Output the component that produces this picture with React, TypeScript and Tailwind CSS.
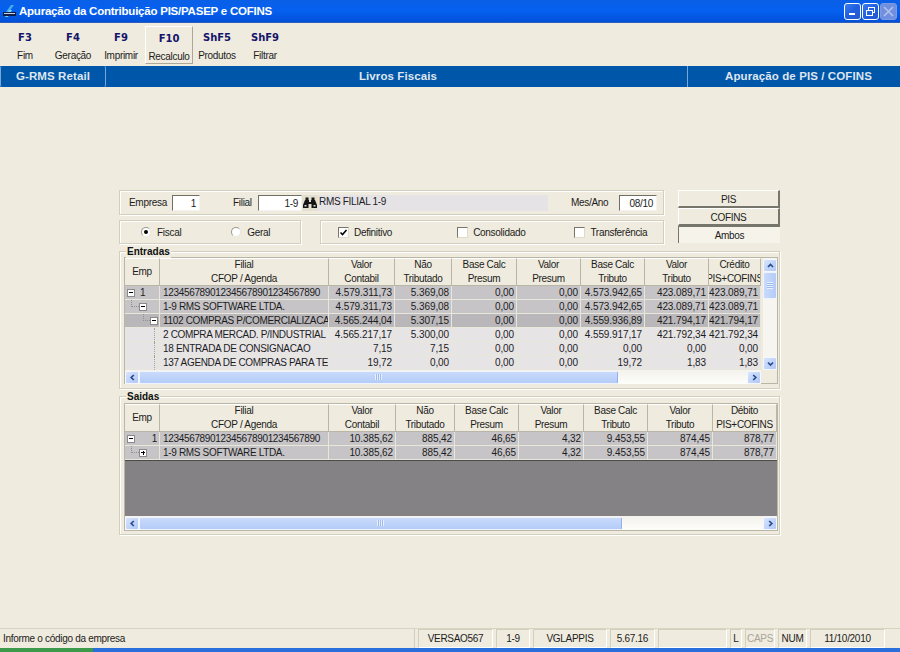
import { ReactNode } from "react"

const tools = [
  { key: "F3", label: "Fim" },
  { key: "F4", label: "Geração" },
  { key: "F9", label: "Imprimir" },
  { key: "F10", label: "Recalculo", raised: true },
  { key: "ShF5", label: "Produtos" },
  { key: "ShF9", label: "Filtrar" },
]

const entradasHead = [
  ["Emp"],
  ["Filial", "CFOP / Agenda"],
  ["Valor", "Contabil"],
  ["Não", "Tributado"],
  ["Base Calc", "Presum"],
  ["Valor", "Presum"],
  ["Base Calc", "Tributo"],
  ["Valor", "Tributo"],
  ["Crédito", "PIS+COFINS"],
]

const saidasHead = [...entradasHead.slice(0, 8), ["Débito", "PIS+COFINS"]]

const entradasRows = [
  { level: 0, tone: "mid", emp: "1", name: "123456789012345678901234567890", values: ["4.579.311,73", "5.369,08", "0,00", "0,00", "4.573.942,65", "423.089,71", "423.089,71"] },
  { level: 1, tone: "mid", emp: "", name: "1-9 RMS SOFTWARE LTDA.", values: ["4.579.311,73", "5.369,08", "0,00", "0,00", "4.573.942,65", "423.089,71", "423.089,71"] },
  { level: 2, tone: "dark", emp: "", name: "1102 COMPRAS P/COMERCIALIZACA", values: ["4.565.244,04", "5.307,15", "0,00", "0,00", "4.559.936,89", "421.794,17", "421.794,17"] },
  { level: 3, tone: "light", emp: "", name: "2 COMPRA MERCAD. P/INDUSTRIAL", values: ["4.565.217,17", "5.300,00", "0,00", "0,00", "4.559.917,17", "421.792,34", "421.792,34"] },
  { level: 3, tone: "light", emp: "", name: "18 ENTRADA DE CONSIGNACAO", values: ["7,15", "7,15", "0,00", "0,00", "0,00", "0,00", "0,00"] },
  { level: 3, tone: "light", emp: "", name: "137 AGENDA DE COMPRAS PARA TE", values: ["19,72", "0,00", "0,00", "0,00", "19,72", "1,83", "1,83"] },
]

const saidasRows = [
  { level: 0, tone: "mid", emp: "1", name: "123456789012345678901234567890", values: ["10.385,62", "885,42", "46,65", "4,32", "9.453,55", "874,45", "878,77"] },
  { level: 1, tone: "mid", emp: "", name: "1-9 RMS SOFTWARE LTDA.", plus: true, values: ["10.385,62", "885,42", "46,65", "4,32", "9.453,55", "874,45", "878,77"] },
]

const statusCells = [
  { text: "VERSAO567", width: "w-[75px]" },
  { text: "1-9", width: "w-[34px]" },
  { text: "VGLAPPIS", width: "w-[74px]" },
  { text: "5.67.16", width: "w-[45px]" },
  { text: "", width: "w-[69px]" },
  { text: "L", width: "w-[12px]" },
  { text: "CAPS", width: "w-[30px]", muted: true },
  { text: "NUM", width: "w-[29px]" },
  { text: "11/10/2010", width: "w-[75px]" },
]

function Chevron({ dir }: { dir: "up" | "down" | "left" | "right" }) {
  const points = {
    up: "2,6 4.5,3.5 7,6",
    down: "2,3.5 4.5,6 7,3.5",
    left: "5.8,2 3.2,4.5 5.8,7",
    right: "3.2,2 5.8,4.5 3.2,7",
  }[dir]
  return (
    <svg width="9" height="9" viewBox="0 0 9 9" fill="none">
      <polyline points={points} stroke="#2b4a8c" strokeWidth="1.7" />
    </svg>
  )
}

function ScrollButton({ dir }: { dir: "up" | "down" | "left" | "right" }) {
  return (
    <div className="w-[14px] h-[13px] shrink-0 flex items-center justify-center rounded-[2px] border border-[#f4f7fe] bg-gradient-to-br from-[#d6e4fd] to-[#b0c8f6]">
      <Chevron dir={dir} />
    </div>
  )
}

function HScroll({ thumb }: { thumb: string }) {
  return (
    <div className="h-[14px] flex items-center bg-gradient-to-b from-[#f3f2ec] to-[#fdfdfb]">
      <ScrollButton dir="left" />
      <div className={`${thumb} h-[13px] flex items-center justify-center rounded-[2px] border border-[#eef3fd] border-r-[#8fb0ea] bg-gradient-to-b from-[#c9dafb] to-[#b4ccf8]`}>
        <div className="w-[7px] h-[6px] bg-[repeating-linear-gradient(90deg,#e8effd_0,#e8effd_1px,#9db9ee_1px,#9db9ee_2px)]" />
      </div>
      <div className="flex-1" />
      <ScrollButton dir="right" />
    </div>
  )
}

function TreeBox({ plus }: { plus?: boolean }) {
  return (
    <div className="relative w-[8px] h-[8px] bg-white border border-[#8a8a8a] shrink-0">
      <div className="absolute left-[1px] top-[2px] w-[4px] h-[1px] bg-black" />
      {plus && <div className="absolute left-[2.5px] top-[1px] w-[1px] h-[4px] bg-black" />}
    </div>
  )
}

function HeaderCells({ head }: { head: string[][] }) {
  return (
    <>
      {head.map((lines) => (
        <div
          key={lines[0] + lines[1]}
          className="h-[28px] overflow-hidden flex flex-col items-center justify-center bg-[#efebde] border-r border-b border-[#b9b6a6] border-t-white border-t leading-[14px]"
        >
          {lines.map((line) => (
            <span key={line} className="whitespace-nowrap">
              {line}
            </span>
          ))}
        </div>
      ))}
    </>
  )
}

function TreeCell({ level, emp, plus, alignEnd }: { level: number; emp: string; plus?: boolean; alignEnd?: boolean }) {
  return (
    <div className="relative h-[13px] flex items-center">
      {level === 0 && <div className="ml-[2px]"><TreeBox /></div>}
      {level === 0 && (
        <span className={alignEnd ? "ml-auto mr-[2px]" : "ml-[5px]"}>{emp}</span>
      )}
      {level === 1 && (
        <>
          <div className="absolute left-[6px] top-0 h-[7px] w-[8px] border-l border-b border-dotted border-[#8f8f8f]" />
          <div className="ml-[14px] relative"><TreeBox plus={plus} /></div>
        </>
      )}
      {level === 2 && (
        <>
          <div className="absolute left-[18px] top-0 h-[7px] w-[7px] border-l border-b border-dotted border-[#8f8f8f]" />
          <div className="ml-[25px] relative"><TreeBox /></div>
        </>
      )}
      {level === 3 && <div className="absolute left-[29px] top-0 h-[14px] border-l border-dotted border-[#a0a0a0]" />}
    </div>
  )
}

type Row = { level: number; tone: string; emp: string; name: string; plus?: boolean; values: string[] }

function BodyRow({ row, alignEnd }: { row: Row; alignEnd?: boolean }) {
  const tone =
    row.tone === "dark" ? "bg-[#b9b7ba]" : row.tone === "mid" ? "bg-[#c6c4c7]" : "bg-[#e7e4e6]"
  const cell = `h-[14px] ${tone} border-r border-b border-[#e9e6da]`
  return (
    <>
      <div className={cell}>
        <TreeCell level={row.level} emp={row.emp} plus={row.plus} alignEnd={alignEnd} />
      </div>
      <div className={`${cell} pl-[3px] overflow-hidden whitespace-nowrap leading-[13px] tracking-[-0.33px]`}>{row.name}</div>
      {row.values.map((value, i) => (
        <div key={i} className={`${cell} pr-[2px] text-right whitespace-nowrap overflow-hidden leading-[13px] tracking-[-0.1px]`}>
          {value}
        </div>
      ))}
    </>
  )
}

function GroupBox({ title, className, children }: { title?: string; className: string; children: ReactNode }) {
  return (
    <div className={`relative border border-[#d2cfbd] shadow-[inset_1px_1px_0_#fff,1px_1px_0_#fff] ${className}`}>
      {title && (
        <span className="absolute left-[6px] top-[-6px] px-[1px] bg-[#efebde] font-bold tracking-normal leading-[12px] text-[#111]">
          {title}
        </span>
      )}
      {children}
    </div>
  )
}

function Radio({ on, label }: { on?: boolean; label: string }) {
  return (
    <div className="flex items-center gap-[6px]">
      <div className="w-[10px] h-[10px] rounded-full border border-[#9a9a90] border-r-[#e8e8e0] border-b-[#e8e8e0] bg-white flex items-center justify-center">
        {on && <div className="w-[4px] h-[4px] rounded-full bg-black" />}
      </div>
      <span>{label}</span>
    </div>
  )
}

function Check({ on, label }: { on?: boolean; label: string }) {
  return (
    <div className="flex items-center gap-[5px]">
      <div className="w-[11px] h-[11px] border border-[#77766c] border-r-[#dedbcb] border-b-[#dedbcb] bg-white flex items-center justify-center">
        {on && (
          <svg width="9" height="9" viewBox="0 0 9 9" fill="none">
            <polyline points="1.5,4.5 3.5,6.5 7.5,2" stroke="#000" strokeWidth="1.6" />
          </svg>
        )}
      </div>
      <span>{label}</span>
    </div>
  )
}

function Field({ value, width }: { value: string; width: string }) {
  return (
    <div className={`${width} h-[16px] pr-[3px] text-right leading-[15px] bg-white border border-[#716f64] border-r-[#f4f3ee] border-b-[#f4f3ee]`}>
      {value}
    </div>
  )
}

function SideButton({ label, pressed }: { label: string; pressed?: boolean }) {
  return pressed ? (
    <div className="h-[17px] text-center leading-[17px] bg-[#f5f3ea] border-l border-t border-[#77766c]">{label}</div>
  ) : (
    <div className="h-[18px] text-center leading-[18px] bg-[#efebde] border-r-2 border-b-2 border-[#77766c] border-t border-l border-t-white border-l-white">
      {label}
    </div>
  )
}

function Binoculars() {
  return (
    <svg width="14" height="12" viewBox="0 0 14 12" fill="#151515">
      <rect x="2.5" y="0.5" width="3" height="3" />
      <rect x="8.5" y="0.5" width="3" height="3" />
      <path d="M2 3h4v2h2V3h4l2 5v3H8.5V7h-3v4H0V8z" />
      <rect x="1.5" y="8" width="2" height="1.5" fill="#dcdcdc" />
      <rect x="10.5" y="8" width="2" height="1.5" fill="#dcdcdc" />
    </svg>
  )
}

function WindowButton({ disabled, children }: { disabled?: boolean; children: ReactNode }) {
  return (
    <div
      className={`w-[17px] h-[17px] rounded-[3px] border flex items-center justify-center ${
        disabled
          ? "border-[#7f9ae0] bg-[#6f8fe0]"
          : "border-white bg-gradient-to-br from-[#3c7cf0] via-[#1f5fe0] to-[#2a56c8]"
      }`}
    >
      {children}
    </div>
  )
}

export default function App() {
  return (
    <div className="w-[900px] h-[652px] overflow-hidden flex flex-col bg-[#efebde] text-[#1c1c1c] text-[10px] tracking-[-0.3px] font-['Liberation_Sans',sans-serif]">
      {/* title bar */}
      <div className="h-[23px] shrink-0 flex items-center bg-gradient-to-b from-[#0a5fe6] via-[#0560f0] to-[#0350d8] border-b border-[#2a5fc0]">
        <svg className="ml-[2px] mt-[2px]" width="15" height="14" viewBox="0 0 15 14">
          <path d="M9 0h3L7 7H4z" fill="#3fb0e8" />
          <path d="M7 5h3L6 12H3z" fill="#7fd0ef" />
          <rect x="1" y="7" width="13" height="4" fill="#10204a" />
          <rect x="2" y="8" width="11" height="1" fill="#c9d4e6" />
        </svg>
        <span className="ml-[2px] mt-[2px] text-white font-bold text-[11.5px] tracking-[-0.23px] whitespace-nowrap">
          Apuração da Contribuição PIS/PASEP e COFINS
        </span>
        <div className="ml-auto mr-[3px] flex items-center gap-[1px]">
          <WindowButton>
            <div className="w-[6px] h-[2px] bg-white mt-[6px] mr-[2px]" />
          </WindowButton>
          <WindowButton>
            <svg width="11" height="11" viewBox="0 0 11 11" fill="none" stroke="#fff">
              <rect x="3.5" y="1.5" width="6" height="5" />
              <rect x="1.5" y="4.5" width="6" height="5" fill="#2a62e0" />
            </svg>
          </WindowButton>
          <WindowButton disabled>
            <svg width="11" height="11" viewBox="0 0 11 11" stroke="#b3c2ec" strokeWidth="1.6">
              <path d="M1 1l9 9M10 1l-9 9" />
            </svg>
          </WindowButton>
        </div>
      </div>

      {/* toolbar */}
      <div className="h-[43px] shrink-0 flex items-center pl-[1px]">
        {tools.map((tool) => (
          <div
            key={tool.key}
            className={`w-[48px] h-[38px] flex flex-col items-center pt-[5px] ${
              tool.raised ? "border border-white border-r-[#aca899] border-b-[#aca899]" : ""
            }`}
          >
            <span className="font-bold text-[#14146a] text-[10px] tracking-normal leading-[14px] font-['DejaVu_Sans',sans-serif] mb-[4px]">{tool.key}</span>
            <span className="leading-[14px] whitespace-nowrap">{tool.label}</span>
          </div>
        ))}
      </div>

      {/* section band */}
      <div className="h-[21px] shrink-0 flex bg-[#0057aa] text-[#dfe6ee] font-bold text-[11.5px] tracking-[0.1px]">
        <div className="w-[106px] flex items-center justify-center border-x border-[#7aa6d6] rounded-[2px]">G-RMS Retail</div>
        <div className="flex-1 pl-[3px] flex items-center justify-center">Livros Fiscais</div>
        <div className="w-[213px] pl-[9px] flex items-center justify-center border-l border-[#7aa6d6]">Apuração de PIS / COFINS</div>
      </div>

      {/* form */}
      <div className="flex-1 pt-[103px] pl-[119px]">
        <div className="w-[661px] flex gap-[14px]">
          <div className="w-[545px] flex flex-col gap-[5px]">
            <GroupBox className="h-[25px] flex items-center pl-[9px]">
              <span className="w-[35px] whitespace-nowrap">Empresa</span>
              <div className="ml-[8px]"><Field value="1" width="w-[28px]" /></div>
              <span className="ml-[33px] w-[18px]">Filial</span>
              <div className="ml-[7px]"><Field value="1-9" width="w-[44px]" /></div>
              <div className="w-[16px] h-[16px] flex items-center justify-center bg-[#e4e0d0]">
                <Binoculars />
              </div>
              <div className="w-[230px] h-[16px] pl-[1px] leading-[14px] bg-[#e6e3e6] whitespace-nowrap">RMS FILIAL 1-9</div>
              <span className="ml-[23px] w-[39px] whitespace-nowrap">Mes/Ano</span>
              <div className="ml-[9px]"><Field value="08/10" width="w-[38px]" /></div>
            </GroupBox>
            <div className="flex gap-[19px]">
              <GroupBox className="w-[182px] h-[24px] flex items-center pl-[21px] gap-[50px]">
                <Radio on label="Fiscal" />
                <Radio label="Geral" />
              </GroupBox>
              <GroupBox className="w-[344px] h-[24px] flex items-center pl-[17px]">
                <Check on label="Definitivo" />
                <div className="ml-[65px]"><Check label="Consolidado" /></div>
                <div className="ml-[49px]"><Check label="Transferência" /></div>
              </GroupBox>
            </div>
          </div>
          <div className="w-[102px] flex flex-col">
            <SideButton label="PIS" />
            <SideButton label="COFINS" />
            <SideButton label="Ambos" pressed />
          </div>
        </div>

        {/* entradas */}
        <GroupBox title="Entradas" className="w-[661px] h-[138px] mt-[7px] pt-[5px] pl-[4px]">
          <div className="w-[654px] h-[127px] border border-[#b9b6a6] bg-[#efebde] flex">
            <div className="w-[636px]">
              <div className="grid grid-cols-[35px_169px_66px_57px_65px_64px_64px_64px_52px]">
                <HeaderCells head={entradasHead} />
                {entradasRows.map((row) => (
                  <BodyRow key={row.name} row={row} />
                ))}
              </div>
              <HScroll thumb="w-[479px]" />
            </div>
            <div className="w-[14px] ml-[2px] pt-[1px] h-[112px] flex flex-col bg-[#f6f5ef]">
              <ScrollButton dir="up" />
              <div className="h-[27px] flex items-center justify-center rounded-[2px] border border-[#eef3fd] bg-gradient-to-r from-[#c9dafb] to-[#b4ccf8]">
                <div className="w-[6px] h-[7px] bg-[repeating-linear-gradient(0deg,#e8effd_0,#e8effd_1px,#9db9ee_1px,#9db9ee_2px)]" />
              </div>
              <div className="flex-1" />
              <ScrollButton dir="down" />
            </div>
          </div>
        </GroupBox>

        {/* saidas */}
        <GroupBox title="Saidas" className="w-[661px] h-[139px] mt-[7px] pt-[6px] pl-[4px]">
          <div className="w-[654px] h-[128px] border border-[#b9b6a6] bg-[#848284] flex flex-col">
            <div className="grid grid-cols-[35px_169px_67px_59px_64px_65px_64px_65px_64px]">
              <HeaderCells head={saidasHead} />
              {saidasRows.map((row) => (
                <BodyRow key={row.name} row={row} alignEnd />
              ))}
            </div>
            <div className="h-[1px] bg-[#4a4a4a]" />
            <div className="flex-1" />
            <HScroll thumb="w-[483px]" />
          </div>
        </GroupBox>
      </div>

      {/* status bar */}
      <div className="h-[20px] shrink-0 flex gap-[3px] border-t border-[#d8d4c2]">
        <div className="w-[415px] pl-[3px] leading-[19px] border-r border-[#d2cfbd] whitespace-nowrap">Informe o código da empresa</div>
        {statusCells.map((cell) => (
          <div
            key={cell.text || "empty"}
            className={`${cell.width} text-center leading-[17px] border border-[#d2cfbd] border-b-white border-r-white shrink-0 ${
              cell.muted ? "text-[#a8a69a]" : ""
            }`}
          >
            {cell.text}
          </div>
        ))}
      </div>

      {/* desktop strip */}
      <div className="h-[4px] shrink-0 flex">
        <div className="w-[93px] bg-[#3c9a4a]" />
        <div className="flex-1 bg-[#2b6fdc]" />
      </div>
    </div>
  )
}
